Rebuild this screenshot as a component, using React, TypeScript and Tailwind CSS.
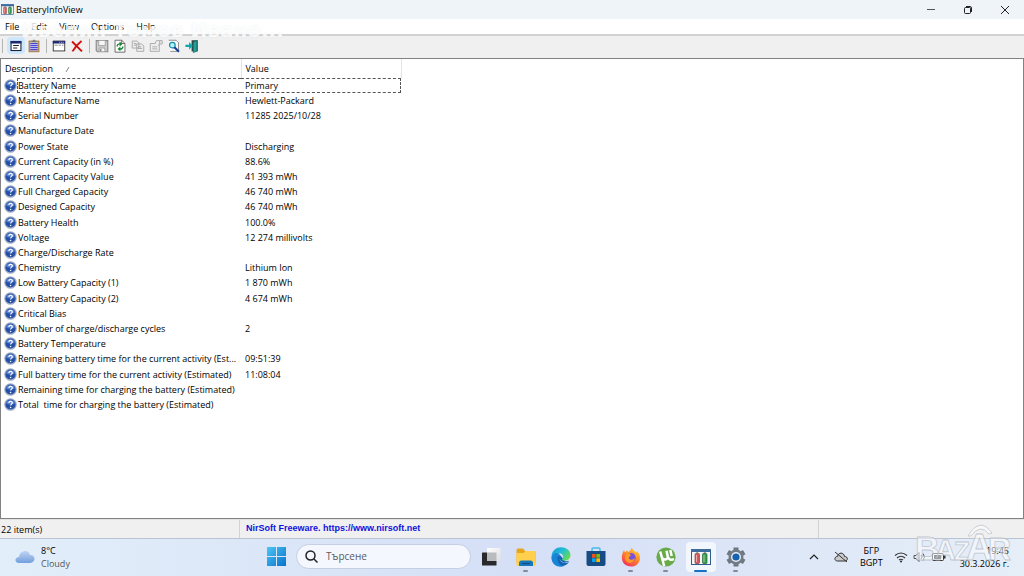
import React, { type ReactNode } from "react";

const rows: [string, string][] = [
  ["Battery Name", "Primary"],
  ["Manufacture Name", "Hewlett-Packard"],
  ["Serial Number", "11285 2025/10/28"],
  ["Manufacture Date", ""],
  ["Power State", "Discharging"],
  ["Current Capacity (in %)", "88.6%"],
  ["Current Capacity Value", "41 393 mWh"],
  ["Full Charged Capacity", "46 740 mWh"],
  ["Designed Capacity", "46 740 mWh"],
  ["Battery Health", "100.0%"],
  ["Voltage", "12 274 millivolts"],
  ["Charge/Discharge Rate", ""],
  ["Chemistry", "Lithium Ion"],
  ["Low Battery Capacity (1)", "1 870 mWh"],
  ["Low Battery Capacity (2)", "4 674 mWh"],
  ["Critical Bias", ""],
  ["Number of charge/discharge cycles", "2"],
  ["Battery Temperature", ""],
  ["Remaining battery time for the current activity (Est...", "09:51:39"],
  ["Full battery time for the current activity (Estimated)", "11:08:04"],
  ["Remaining time for charging the battery (Estimated)", ""],
  ["Total  time for charging the battery (Estimated)", ""],
];

function BatteryLogo({ className }: { className: string }) {
  return (
    <svg viewBox="0 0 20 16" className={className} aria-hidden="true">
      <rect x="0.5" y="0.5" width="19" height="15" fill="#f4f6f8" stroke="#315d8d" />
      <rect x="0" y="0" width="20" height="3" fill="#3c6c9e" />
      <rect x="4" y="4.5" width="4.500" height="10" rx="1" fill="#d85858" stroke="#8d3f45" strokeWidth=".7" />
      <rect x="5.2" y="3.3" width="2" height="1.4" fill="#777" />
      <rect x="11.5" y="4.5" width="4.500" height="10" rx="1" fill="#35a04c" stroke="#28613a" strokeWidth=".7" />
      <rect x="12.8" y="3.3" width="2" height="1.4" fill="#666" />
      <path d="M5.500 6v7M13 6v7" stroke="#fff" strokeOpacity=".5" />
    </svg>
  );
}

function Help() {
  return (
    <svg viewBox="0 0 13 13" className="size-[13px] shrink-0" aria-hidden="true">
      <circle cx="6.5" cy="6.5" r="6.3" fill="#a3afc6" />
      <circle cx="6.5" cy="6.5" r="5.1" fill="#2650a8" />
      <path d="M2.2 5.5a4.5 4.5 0 0 1 8.6 0Q6.5 7.5 2.2 5.5" fill="#5e86d4" />
      <path d="M4.9 5.1c0-2.3 3.5-2.2 3.4-.2 0 1.2-1.7 1.3-1.7 2.7" fill="none" stroke="#fff" strokeWidth="1.2" />
      <circle cx="6.6" cy="9.5" r=".8" fill="#fff" />
    </svg>
  );
}

const toolIcons: Record<string, ReactNode> = {
  Properties: (
    <>
      <rect x="2.5" y="3" width="12" height="11" fill="#fff" stroke="#17213a" strokeWidth="1.3" />
      <path d="M2 4h13" stroke="#1b2b73" strokeWidth="3" />
      <path d="M5 8h7M5 11h5" stroke="#222" strokeWidth="1.3" />
    </>
  ),
  Log: (
    <>
      <rect x="2.5" y="2.5" width="12" height="13" fill="#c89d62" stroke="#9b7440" />
      <rect x="4" y="4" width="9" height="10" fill="#dfe2fb" />
      <path d="M4 5.5h9M4 8h9M4 10.5h9M4 13h9" stroke="#4646cf" strokeWidth="1.5" />
      <path d="M5.5 4V2h1.500l.5-1h2l.5 1h1.500v2z" fill="#777" />
    </>
  ),
  Window: (
    <>
      <rect x="1.5" y="2.5" width="14" height="12" fill="#fff" stroke="#222" />
      <path d="M1 4h15" stroke="#1d2774" strokeWidth="3" />
      <path d="M9 4h1m1 0h1m1 0h1" stroke="#fff" />
      <path d="M3 7.5h4m1 0h3m1 0h2" stroke="#777" />
    </>
  ),
  Delete: <path d="m2.5 3 12 12M14 2.500Q7 8 3 15" fill="none" stroke="#d50c0c" strokeWidth="2.3" />,
  Save: (
    <>
      <path d="M1.500 2h14v13.5H3L1.500 14z" fill="#ccc" stroke="#8b8b8b" strokeWidth="1.4" />
      <path d="M4.5 2v6h8V2M5 15v-4h7v4" fill="#f7f7f7" stroke="#999" />
      <path d="M7 12v3" stroke="#888" strokeWidth="1.8" />
    </>
  ),
  Refresh: (
    <>
      <path d="M2.5 1.5h8l4 4V16h-12z" fill="#fff" stroke="#555" />
      <path d="M10.5 1.5v4h4" fill="none" stroke="#555" />
      <path d="M5 9c0-2.500 2-3.500 4-3M12 9c0 2.500-2 3.500-4 3" fill="none" stroke="#168335" strokeWidth="1.7" />
      <path d="m8 3 3.500 3L8 9zM9 9l-3.500 3L9 15z" fill="#168335" />
    </>
  ),
  Copy: (
    <g fill="#eee" stroke="#a0a0a0">
      <path d="M1.500 2.500h6l2 2V11h-8zM7 6h6l2.500 2.500V15H7z" />
      <path d="M3.500 5.500h3m-3 2h3m2 2h4m-4 2h5" />
    </g>
  ),
  Details: (
    <g fill="#eee" stroke="#a0a0a0">
      <path d="M1.500 5.500h11v9.500h-11z" />
      <path d="M4 9.5h6m-6 2.500h6M7 6l2-4h4v4l-2 2M13 2h3v4h-3" />
    </g>
  ),
  Find: (
    <>
      <path d="M2 1.5h9l3 3V15H4" fill="#fff" stroke="#777" />
      <circle cx="6.5" cy="7.500" r="3.4" fill="#b9f3f8" stroke="#158fad" strokeWidth="1.5" />
      <path d="m9 10 5.500 5.500" stroke="#193f98" strokeWidth="2.6" />
    </>
  ),
  Exit: (
    <>
      <path d="M8 1.500h7.500V15H8z" fill="#304444" />
      <path d="m10 4 4.500-2.500V15L10 16.500z" fill="#1ea09b" stroke="#235c5d" strokeWidth=".7" />
      <path d="M.5 7H5V3.500l4.500 4.700L5 13V9.800H.5z" fill="#12a5a8" />
    </>
  ),
};

function Tool({ name, active = false }: { name: string; active?: boolean }) {
  return (
    <button
      type="button"
      aria-label={name}
      className={
        active
          ? "flex h-[17px] w-[18px] items-center justify-center rounded-sm bg-[#cce6fb]"
          : "flex h-[17px] w-[18px] items-center justify-center"
      }
    >
      <svg viewBox="0 0 17 17" className="size-[14px]">{toolIcons[name]}</svg>
    </button>
  );
}

const Divider = () => <span className="mx-[3px] h-[14px] w-px bg-[#b5b5b5]" />;

function AppIcon({ name }: { name: string }) {
  if (name === "Task view")
    return (
      <svg viewBox="0 0 20 20" className="size-5">
        <defs>
          <linearGradient id="task-light" x1="0" x2="1" y1="0" y2="1"><stop stopColor="#fff" /><stop offset="1" stopColor="#dedede" /></linearGradient>
        </defs>
        <rect x="1" y="5.500" width="14.500" height="13" rx=".6" fill="#29292b" />
        <rect x="6" y="1" width="13.500" height="13" rx=".6" fill="url(#task-light)" />
        <rect x="6" y="5.500" width="9.500" height="8.500" fill="#b9bbbe" />
      </svg>
    );
  if (name === "File Explorer")
    return (
      <svg viewBox="0 0 20 20" className="size-5">
        <path d="M.5 3q0-1.5 1.5-1.5h5L9 4h9q1.5 0 1.5 1.5V16h-19z" fill="#e7a51a" />
        <path d="M.5 6h7l2-2h10v14q0 1-1 1h-17q-1 0-1-1z" fill="#ffd04d" />
        <path d="M3 19v-3q0-2.500 2.500-2.500h9q2.500 0 2.500 2.500v3z" fill="#1877bd" />
        <path d="M6 16.500h8" stroke="#0e4f8a" strokeWidth="1.3" />
      </svg>
    );
  if (name === "Edge")
    return (
      <svg viewBox="0 0 20 20" className="size-5">
        <defs>
          <linearGradient id="edge-top" x1="0" x2="1" y1="0" y2=".6">
            <stop stopColor="#1693dc" />
            <stop offset=".55" stopColor="#22bfd0" />
            <stop offset="1" stopColor="#67d957" />
          </linearGradient>
        </defs>
        <path d="M.5 10a9.500 9.500 0 0 0 17.800 4.500l-1-.8q-1 .5-3 .5L9 8z" fill="#1264b3" />
        <path d="M.5 10C.5-3 19-2.500 19.500 8c0 4-3 5.700-6 5.700-2 0-3-.9-2-2 2-3-1-6-4-5.500Q3 6.200.5 10z" fill="url(#edge-top)" />
        <path d="M.6 11C1 6 6 5 9 7c-5 3-2 12 4 12-7 2-12.500-2-12.400-8" fill="#1685d8" />
        <path d="M10 8c-3 3-.5 7 3.500 7.500 2 0 3.600-.8 5-1.500l-.6.900C12 18 6 13 10 8" fill="#d8e5fa" />
      </svg>
    );
  if (name === "Microsoft Store")
    return (
      <svg viewBox="0 0 20 20" className="size-5">
        <path d="M6 5V2q0-1 1-1h6q1 0 1 1v3" fill="none" stroke="#45b9ea" strokeWidth="1.5" />
        <path d="M.5 4h19v13q0 2-2 2h-15q-2 0-2-2z" fill="#174b83" />
        <path d="M6 7h3.700v3.700H6z" fill="#f25022" />
        <path d="M10.300 7H14v3.700h-3.700z" fill="#7fba00" />
        <path d="M6 11.300h3.700V15H6z" fill="#00a4ef" />
        <path d="M10.300 11.300H14V15h-3.700z" fill="#ffb900" />
      </svg>
    );
  if (name === "Firefox")
    return (
      <svg viewBox="0 0 20 20" className="size-5">
        <defs>
          <linearGradient id="fox" x1=".8" y1="0" x2=".2" y2="1">
            <stop stopColor="#ffd83d" />
            <stop offset=".5" stopColor="#ff8128" />
            <stop offset="1" stopColor="#f32b66" />
          </linearGradient>
        </defs>
        <path d="M3 3l1 2.500 2-2 1.500 1.500q2-1 3-4.500 1.500 3 5 5l.8-1.500c6 7 1.500 15.500-6.300 15.500S-2 12 3 3" fill="url(#fox)" />
        <circle cx="10.300" cy="10.500" r="4.400" fill="#7651db" />
        <path d="M5 7c3-1 4 0 5 1l-2 2c-1 3 3 4 6 1-1 6-9 7-10 0z" fill="#ff9b25" />
      </svg>
    );
  if (name === "µTorrent")
    return (
      <svg viewBox="0 0 20 20" className="size-5">
        <circle cx="10" cy="10" r="9.600" fill="#68a948" />
        <path d="M4.200 4.500 8.200 19M5.800 10c1 3.500 6.500 3.200 5.900-.8L10.500 3.800M11.700 9.200c.8 3.500 3.300 4.300 6.300 3M14.300 3l1.400 6" fill="none" stroke="#fff" strokeWidth="2.500" />
      </svg>
    );
  if (name === "BatteryInfoView") return <BatteryLogo className="h-4 w-5" />;
  return (
    <svg viewBox="0 0 20 20" className="size-5">
      <g stroke="#6d7680" strokeWidth="5">
        <path d="M10 .5v19M1.800 5.200l16.400 9.600M1.800 14.800l16.400-9.600" />
      </g>
      <circle cx="10" cy="10" r="7.500" fill="#737c86" />
      <circle cx="10" cy="10" r="5" fill="#e7edf5" />
      <circle cx="10" cy="10" r="3.600" fill="#1762ae" />
    </svg>
  );
}

const apps = ["Task view", "File Explorer", "Edge", "Microsoft Store", "Firefox", "µTorrent", "BatteryInfoView", "Settings"];
const running = ["File Explorer", "Firefox", "µTorrent", "Settings"];

export default function App() {
  return (
    <div className="relative flex min-h-screen flex-col bg-[#f0f0f0] font-['Open_Sans','Noto_Sans',sans-serif] text-[9px] text-black">
      <header className="flex h-[19px] items-center bg-[#eff4f9] pl-[1px]">
        <BatteryLogo className="h-[11px] w-[13px]" />
        <h1 className="ml-[2px] flex-1 text-[9px]">BatteryInfoView</h1>
        <div className="flex pr-[1px]">
          <button type="button" aria-label="Minimize" className="flex w-[37px] justify-center">
            <svg viewBox="0 0 10 10" className="size-[10px]"><path d="M1 4.500h8" stroke="#555" /></svg>
          </button>
          <button type="button" aria-label="Restore" className="flex w-[37px] justify-center">
            <svg viewBox="0 0 10 10" className="size-[10px]" fill="none" stroke="#222"><rect x="1.500" y="2.500" width="6" height="6" rx="1" /><path d="M3 1.500h4q1.500 0 1.500 1.500v4" /></svg>
          </button>
          <button type="button" aria-label="Close" className="flex w-[37px] justify-center">
            <svg viewBox="0 0 10 10" className="size-[10px]"><path d="m1 1 8 8M9 1 1 9" stroke="#222" /></svg>
          </button>
        </div>
      </header>

      <nav className="flex h-[15px] items-center gap-3 bg-white pl-[5px]">
        <button type="button">File</button>
        <button type="button">Edit</button>
        <button type="button">View</button>
        <button type="button">Options</button>
        <button type="button">Help</button>
      </nav>

      <div role="toolbar" aria-label="Main toolbar" className="flex h-6 items-center border-t-2 border-[#d2d2d2] pb-[3px] pl-[2px]">
        <span className="mr-[4px] h-[14px] w-px bg-[#b5b5b5]" />
        <Tool name="Properties" active />
        <Tool name="Log" />
        <Divider />
        <Tool name="Window" />
        <Tool name="Delete" />
        <Divider />
        <Tool name="Save" />
        <Tool name="Refresh" />
        <Tool name="Copy" />
        <Tool name="Details" />
        <Tool name="Find" />
        <Tool name="Exit" />
      </div>

      <main className="flex-1 border border-[#828282] bg-white">
        <table className="w-[400px] table-fixed border-collapse text-left leading-[15px]">
          <colgroup><col className="w-[240px]" /><col className="w-[160px]" /></colgroup>
          <thead>
            <tr className="h-[19px]">
              <th className="border-r border-[#e4e4e4] p-0 pl-[4px] font-normal">
                <span className="flex items-center gap-3">Description
                  <svg viewBox="0 0 6 6" className="size-[6px]"><path d="m1 6 3-5" stroke="#888" /></svg>
                </span>
              </th>
              <th className="border-r border-[#e4e4e4] p-0 pl-[4px] font-normal">Value</th>
            </tr>
          </thead>
          <tbody>
            {rows.map(([label, value], i) => (
              <tr key={label} className="h-[15px] [&:nth-child(5n)]:h-4">
                <td className="p-0">
                  <div className="flex h-[15px] items-center pl-[3px]">
                    <Help />
                    <span className={i === 0 ? "h-[15px] flex-1 border-y border-l border-dashed border-[#555] leading-[13px]" : "flex-1 whitespace-pre pl-px"}>{label}</span>
                  </div>
                </td>
                <td className="p-0">
                  <div className={i === 0 ? "h-[15px] border-y border-r border-dashed border-[#555] pl-[4px] leading-[13px]" : "h-[15px] pl-[4px]"}>{value}</div>
                </td>
              </tr>
            ))}
          </tbody>
        </table>
      </main>

      <footer className="flex h-[19px] items-stretch border-t border-[#e2e2e2]">
        <span className="w-[240px] border-r border-[#d2d2d2] pl-[1px] leading-[20px]">22 item(s)</span>
        <a href="https://www.nirsoft.net" className="flex-1 pl-[6px] font-['Liberation_Sans',sans-serif] font-bold leading-[17px] text-[#1111dd]">NirSoft Freeware. https://www.nirsoft.net</a>
        <span className="w-[206px] border-l border-[#d2d2d2]" />
      </footer>

      <div className="grid h-[38px] grid-cols-[1fr_auto_1fr] items-center border-t border-[#b9c3d2] bg-linear-to-r from-[#e2effa] via-[#d5dff6] to-[#e6eef8] pb-[2px]">
        <button type="button" className="flex items-center gap-[6px] pl-[15px] text-left">
          <svg viewBox="0 0 20 14" className="h-[14px] w-5">
            <defs><linearGradient id="cloud" x1="0" x2="0" y1="0" y2="1"><stop stopColor="#bfd4f4" /><stop offset="1" stopColor="#739edc" /></linearGradient></defs>
            <path d="M4 13C-1 13-.5 7 4 7c1-7 10-8 11-2 6-.5 6 8 0 8z" fill="url(#cloud)" />
          </svg>
          <span className="leading-[13px]"><span className="block">8°C</span><span className="block text-[#555]">Cloudy</span></span>
        </button>

        <div className="flex items-center pr-1">
          <button type="button" aria-label="Start" className="mr-[10px]">
            <svg viewBox="0 0 19 19" className="size-[19px]">
              <defs><linearGradient id="win" x1="0" x2="1" y1="0" y2="1"><stop stopColor="#4cc5f4" /><stop offset="1" stopColor="#0872cb" /></linearGradient></defs>
              <path d="M0 0h9v9H0zM10 0h9v9h-9zM0 10h9v9H0zM10 10h9v9h-9z" fill="url(#win)" />
            </svg>
          </button>
          <label className="mr-[2px] flex h-[25px] w-[175px] items-center gap-2 rounded-full border border-[#c5cfe2] bg-[#f4f7fe] pl-2">
            <svg viewBox="0 0 13 13" className="size-[13px] shrink-0" fill="none" stroke="#222" strokeWidth="1.500"><circle cx="5.500" cy="5.500" r="4.500" /><path d="m9 9 3.500 3.500" /></svg>
            <input aria-label="Търсене" placeholder="Търсене" className="w-full min-w-0 bg-transparent text-[10px] outline-none placeholder:text-[#5c5c5c]" />
          </label>
          <div className="flex">
            {apps.map((name) => (
              <button key={name} type="button" aria-label={name} className="flex w-[35px] justify-center">
                <span className={name === "BatteryInfoView" ? "relative flex h-[30px] w-[30px] items-center justify-center rounded bg-[#f2f6fd]" : "relative flex h-[30px] w-[30px] items-center justify-center"}>
                  <AppIcon name={name} />
                  {name === "BatteryInfoView" && <span className="absolute bottom-0 h-[2px] w-[13px] rounded bg-[#1670c5]" />}
                  {running.includes(name) && <span className="absolute bottom-0 h-[2px] w-[5px] rounded bg-[#858b96]" />}
                </span>
              </button>
            ))}
          </div>
        </div>

        <div className="flex items-center justify-end pr-[15px]">
          <svg viewBox="0 0 10 10" className="mr-[15px] size-[10px]" fill="none" stroke="#222" strokeWidth="1.200"><path d="m1 7 4-4 4 4" /></svg>
          <svg viewBox="0 0 14 12" className="mr-[12px] h-3 w-[14px]" fill="#c9c9c9" stroke="#333"><path d="M3.500 10C0 10 0 5.500 3.500 5.500c.5-4.500 6.500-4.500 7 0C14.500 5.500 14 10 11 10z" /><path d="m1 1 12 10" /></svg>
          <span className="mr-[11px] text-center leading-[12px]">БГР<br />BGPT</span>
          <svg viewBox="0 0 14 12" className="mr-[5px] h-3 w-[14px]" fill="none" stroke="#333" strokeWidth="1.200"><path d="M1 4.500q6-5 12 0M3 7q4-3.500 8 0M5 9q2-1.500 4 0" /><circle cx="7" cy="10.500" r=".5" /></svg>
          <svg viewBox="0 0 14 12" className="mr-[5px] h-3 w-[14px]" fill="none" stroke="#555"><path d="M1 4.500h2l3-3v9l-3-3H1zM8 4q2 2 0 4M10 2.500q3 3.500 0 7" /></svg>
          <svg viewBox="0 0 14 12" className="mr-[14px] h-3 w-[14px]"><rect x=".5" y="2.500" width="11" height="7" rx="1" fill="#f5f5f5" stroke="#333" /><path d="M2 4h7v4H2zM12 4.500h1.500v3H12z" fill="#333" /></svg>
          <span className="text-right leading-[13px]">19:45<br />30.3.2026 г.</span>
        </div>
      </div>

      <span className="pointer-events-none absolute left-[21px] top-4 font-['DejaVu_Sans',sans-serif] text-[20px] font-bold leading-[28px] text-white/80 [text-shadow:0_0_2px_rgb(190_200_210_/_0.3)]">Ивелин Томов Ивано...</span>
      <svg viewBox="0 0 100 42" className="pointer-events-none absolute bottom-[10px] right-[12px] h-[42px] w-[100px]" fill="#fff" fillOpacity=".5" stroke="#b4bcc5" strokeOpacity=".8" strokeWidth=".8">
        <g fontFamily="'Liberation Sans', sans-serif" fontWeight="700">
          <text x="3" y="36" fontSize="34">B</text>
          <text x="23" y="36" fontSize="29">A</text>
          <text x="42" y="36" fontSize="26">Z</text>
          <text x="54" y="36" fontSize="37">A</text>
          <text x="76" y="36" fontSize="32">R</text>
        </g>
        <path d="M56 12Q68-8 80 9l-3 1Q68-1 59 12z" />
      </svg>
    </div>
  );
}
